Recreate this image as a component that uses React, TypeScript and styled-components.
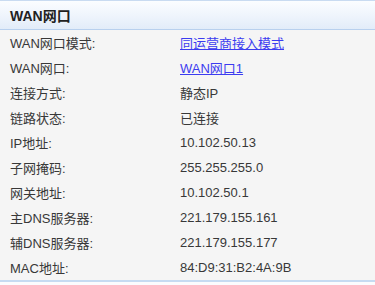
import styled, { createGlobalStyle } from "styled-components";

const GlobalStyle = createGlobalStyle`
  html, body {
    margin: 0;
    padding: 0;
    background: #fbfcfe;
  }
  body {
    font-family: "Liberation Sans", "Noto Sans CJK SC", sans-serif;
    font-size: 13px;
    color: #333333;
  }
`;

const Panel = styled.section`
  width: 375px;
  display: flex;
  flex-direction: column;
`;

const Header = styled.header`
  height: 28px;
  padding: 0 10px;
  display: flex;
  align-items: center;
  border-top: 1px solid #c9dbf1;
  border-bottom: 1px solid #b8d0ee;
  background: linear-gradient(to bottom, #fbfdff 0%, #eef4fc 55%, #e2ecf9 100%);
  font-size: 14px;
  font-weight: bold;
  color: #222222;
`;

const Table = styled.div`
  display: flex;
  flex-direction: column;
  background: #f5f5f5;
  border-bottom: 2px solid #c6dbf2;
`;

const Row = styled.div`
  height: 25px;
  display: grid;
  grid-template-columns: 170px 1fr;
  align-items: center;
  padding-left: 10px;
`;

const Label = styled.span`
  color: #383838;
`;

const Value = styled.span`
  color: #383838;
`;

const Link = styled.a`
  color: #3c3cf0;
  text-decoration: underline;
  cursor: pointer;
`;

interface IRow {
  label: string;
  value: string;
  link?: boolean;
}

const rows: IRow[] = [
  { label: "WAN网口模式:", value: "同运营商接入模式", link: true },
  { label: "WAN网口:", value: "WAN网口1", link: true },
  { label: "连接方式:", value: "静态IP" },
  { label: "链路状态:", value: "已连接" },
  { label: "IP地址:", value: "10.102.50.13" },
  { label: "子网掩码:", value: "255.255.255.0" },
  { label: "网关地址:", value: "10.102.50.1" },
  { label: "主DNS服务器:", value: "221.179.155.161" },
  { label: "辅DNS服务器:", value: "221.179.155.177" },
  { label: "MAC地址:", value: "84:D9:31:B2:4A:9B" },
];

function App() {
  return (
    <>
      <GlobalStyle />
      <Panel>
        <Header>WAN网口</Header>
        <Table>
          {rows.map((row) => (
            <Row key={row.label}>
              <Label>{row.label}</Label>
              {row.link ? <Link>{row.value}</Link> : <Value>{row.value}</Value>}
            </Row>
          ))}
        </Table>
      </Panel>
    </>
  );
}

export default App;
